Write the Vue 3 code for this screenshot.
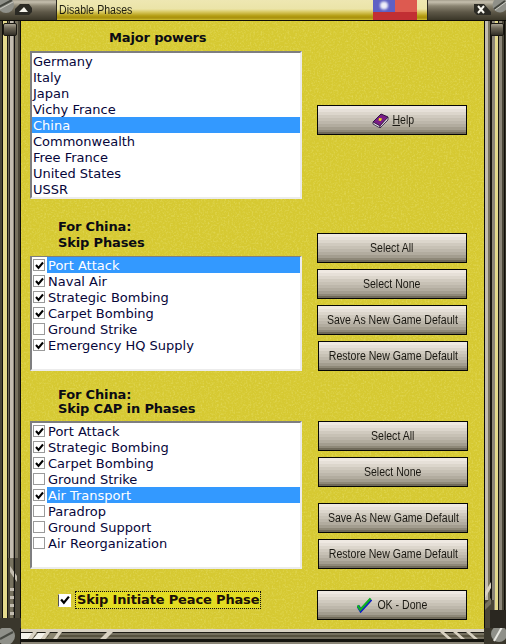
<script setup>
const major = ['Germany', 'Italy', 'Japan', 'Vichy France', 'China', 'Commonwealth', 'Free France', 'United States', 'USSR']
const phases = [
  { t: 'Port Attack', c: true, s: true },
  { t: 'Naval Air', c: true },
  { t: 'Strategic Bombing', c: true },
  { t: 'Carpet Bombing', c: true },
  { t: 'Ground Strike', c: false },
  { t: 'Emergency HQ Supply', c: true },
]
const cap = [
  { t: 'Port Attack', c: true },
  { t: 'Strategic Bombing', c: true },
  { t: 'Carpet Bombing', c: true },
  { t: 'Ground Strike', c: false },
  { t: 'Air Transport', c: true, s: true },
  { t: 'Paradrop', c: false },
  { t: 'Ground Support', c: false },
  { t: 'Air Reorganization', c: false },
]
</script>

<template>
  <div class="win">
    <header class="title">
      <div class="cap left">
        <svg class="screw" width="15" height="14" viewBox="0 0 15 14"><circle cx="6" cy="5" r="8" fill="#8f9089"/><path d="M-1 7 L12 0" stroke="#44463f" stroke-width="2"/><path d="M0 9 L13 2" stroke="#c9c9c2" stroke-width="1"/></svg>
        <svg class="tbtn" width="17" height="11" viewBox="0 0 17 11"><path d="M5 0H14L17 4V8L14 11H0V5Z" fill="#2b2a24"/><path d="M4 8L9 3L13 8Z" fill="#f4f2ea"/></svg>
      </div>
      <div class="strip">
        <span class="caption">Disable Phases</span>
        <div class="flag"><svg width="22" height="12" viewBox="0 0 22 12"><rect width="22" height="12" fill="#5e60c4"/><circle class="sun" cx="11" cy="5.5" r="4" fill="#eeeef8"/></svg></div>
      </div>
      <div class="cap right">
        <svg class="tbtn" width="17" height="11" viewBox="0 0 17 11"><path d="M0 0H10L17 8V11H3L0 8Z" fill="#2b2a24"/><path d="M4 2L10 9M10 2L4 9" stroke="#f8f6ee" stroke-width="2"/></svg>
        <svg class="screw" width="14" height="14" viewBox="0 0 14 14"><circle cx="8" cy="5" r="7.5" fill="#8f9089"/><path d="M2 9 L13 1" stroke="#44463f" stroke-width="2"/><path d="M3 10 L14 2" stroke="#c9c9c2" stroke-width="1"/></svg>
      </div>
    </header>

    <div class="middle">
      <div class="side sl">
        <div class="knob"></div>
        <svg class="deco dl" width="21" height="70" viewBox="0 0 21 70"><rect x="8" y="0" width="12" height="70" fill="#4a4638"/><rect x="10" y="0" width="3" height="70" fill="#77725f"/><path d="M10 8L17 18V24L10 14ZM10 30H15V33H10ZM10 38H15V41H10ZM10 46H15V49H10ZM10 54H15V57H10Z" fill="#c3bdb0"/><rect x="14" y="0" width="1" height="70" fill="#111"/><rect x="0" y="60" width="21" height="10" fill="#3a372c"/></svg>
      </div>

      <main class="content">
        <svg class="grain" width="463" height="608" aria-hidden="true">
          <filter id="g" x="0" y="0" width="100%" height="100%">
            <feTurbulence type="fractalNoise" baseFrequency="0.55" numOctaves="3" seed="4"/>
            <feColorMatrix type="matrix" values="0 0 0 0 1  0 0 0 0 1  0 0 0 0 .5  1.6 0 0 0 -.72"/>
          </filter>
          <rect width="463" height="608" fill="#d6c932"/>
          <rect width="463" height="608" filter="url(#g)" opacity=".35"/>
        </svg>

        <section class="sec a">
          <div class="lc">
            <h2 class="head center">Major powers</h2>
            <div class="list l1">
              <div v-for="m in major" :key="m" class="row plain" :class="{ sel: m === 'China' }">{{ m }}</div>
            </div>
          </div>
          <div class="rc">
            <button class="btn ic">
              <svg width="17" height="16" viewBox="0 0 17 16"><path d="M1 10L9 2L16 5L8 14Z" fill="#7a1c86" stroke="#2e1240"/><path d="M1 10L8 14L8 16L1 12Z" fill="#eee" stroke="#2e1240" stroke-width=".8"/><path d="M8 14L16 5V8L8 16Z" fill="#d8d0d8" stroke="#2e1240" stroke-width=".8"/><path d="M7 6L10 6.5L9 9L6.5 8.5Z" fill="#f0d820"/></svg>
              <span class="bl"><u>H</u>elp</span>
            </button>
          </div>
        </section>

        <section class="sec b">
          <div class="lc">
            <h2 class="head">For China:<br>Skip Phases</h2>
            <div class="list l2">
              <div v-for="p in phases" :key="p.t" class="citem">
                <span class="box"><svg v-if="p.c" width="9" height="9" viewBox="0 0 9 9"><path d="M1 4L3.5 7L8 1.5" fill="none" stroke="#000" stroke-width="2"/></svg></span>
                <span class="row" :class="{ sel: p.s }">{{ p.t }}</span>
              </div>
            </div>
          </div>
          <div class="rc">
            <button class="btn"><span class="bl">Select All</span></button>
            <button class="btn"><span class="bl">Select None</span></button>
            <button class="btn"><span class="bl">Save As New Game Default</span></button>
            <button class="btn nudge"><span class="bl">Restore New Game Default</span></button>
          </div>
        </section>

        <section class="sec c">
          <div class="lc">
            <h2 class="head tight">For China:<br>Skip CAP in Phases</h2>
            <div class="list l3">
              <div v-for="p in cap" :key="p.t" class="citem">
                <span class="box"><svg v-if="p.c" width="9" height="9" viewBox="0 0 9 9"><path d="M1 4L3.5 7L8 1.5" fill="none" stroke="#000" stroke-width="2"/></svg></span>
                <span class="row" :class="{ sel: p.s }">{{ p.t }}</span>
              </div>
            </div>
          </div>
          <div class="rc nudge">
            <button class="btn"><span class="bl">Select All</span></button>
            <button class="btn"><span class="bl">Select None</span></button>
            <button class="btn wide"><span class="bl">Save As New Game Default</span></button>
            <button class="btn"><span class="bl">Restore New Game Default</span></button>
          </div>
        </section>

        <footer class="foot">
          <div class="peace">
            <span class="box big"><svg width="10" height="10" viewBox="0 0 9 9"><path d="M1 4L3.5 7L8 1.5" fill="none" stroke="#000" stroke-width="2"/></svg></span>
            <span class="plabel">Skip Initiate Peace Phase</span>
          </div>
          <button class="btn ic">
            <svg width="15" height="16" viewBox="0 0 16 16"><path d="M1 9L4 14L15 2" fill="none" stroke="#1018c8" stroke-width="3.4"/><path d="M0.5 8.5L3.5 13L14.5 1" fill="none" stroke="#10b020" stroke-width="2.4"/></svg>
            <span class="bl">OK - Done</span>
          </button>
        </footer>
      </main>

      <div class="side sr">
        <div class="knob"></div>
        <svg class="deco dr" width="22" height="50" viewBox="0 0 22 50"><path d="M1 14L7 4V10L1 20Z" fill="#d9d2c2"/><rect x="1" y="22" width="9" height="28" fill="#4a4638"/><path d="M1 26L7 20V26L1 32Z" fill="#77725f"/><rect x="6" y="32" width="16" height="18" fill="#2a2720"/></svg>
      </div>
    </div>

    <div class="bottom">
      <svg width="506" height="16" viewBox="0 0 506 16">
        <rect width="506" height="16" fill="#14130e"/>
        <rect x="0" y="1" width="506" height="3" fill="#d9d2c2"/>
        <rect x="0" y="4" width="506" height="1" fill="#1e1c16"/>
        <rect x="0" y="5" width="506" height="6" fill="#75705f"/>
        <rect x="0" y="7" width="506" height="2" fill="#57523f"/>
        <rect x="0" y="14" width="506" height="2" fill="#8c8778"/>
        <path d="M21 5H33L28 11H21Z" fill="#f4f2ea"/>
        <path d="M38 5H46L41 11H33Z" fill="#f4f2ea"/>
        <path d="M51 5H58L53 11H46Z" fill="#8a8570"/>
        <path d="M33 4H37L32 11H28ZM46 4H50L45 11H41ZM58 4H62L57 11H53ZM107 4H113L106 11H100Z" fill="#d9d2c2"/>
        <path d="M440 4H444L452 11H448ZM453 4H457L465 11H461ZM466 4H470L478 11H474Z" fill="#d9d2c2"/>
        <rect x="0" y="0" width="21" height="16" fill="#3a372c"/>
        <rect x="484" y="0" width="22" height="16" fill="#3a372c"/>
        <circle cx="6" cy="8" r="9" fill="#8f9089"/>
        <path d="M0 11L13 4" stroke="#484a43" stroke-width="2"/>
        <circle cx="499" cy="6" r="8" fill="#8f9089"/>
        <path d="M494 13L502 -1" stroke="#e6e6e0" stroke-width="2"/>
        <rect x="20" y="0" width="1" height="16" fill="#111"/>
      </svg>
    </div>
  </div>
</template>

<style scoped>
.win {
  width: 506px;
  height: 644px;
  overflow: hidden;
  display: flex;
  flex-direction: column;
  background: #1a1814;
  font-family: "DejaVu Sans", sans-serif;
}

.title {
  height: 21px;
  flex: none;
  display: flex;
  border-bottom: 1px solid #0c0b08;
  box-sizing: border-box;
}
.cap {
  display: flex;
  flex: none;
  background: linear-gradient(#a59f8e 0, #c5bfae 2px, #8a8472 6px, #5e5848 12px, #3a3628 20px);
}
.cap.left { width: 56px; border-right: 1px solid #2a2720; }
.cap.right { width: 78px; justify-content: flex-end; border-left: 1px solid #2a2720; }
.left .tbtn { margin: 4px 0 0 0; }
.right .tbtn { margin: 4px 1px 0 0; }
.strip {
  flex: 1;
  display: flex;
  align-items: flex-start;
  background: linear-gradient(#eee7b2 0, #ebe4a8 9px, #d8c860 12px, #b39c10 16px, #a89010 18px, #d0c030 20px);
}
.caption {
  display: inline-block;
  font: 12px/20px "Liberation Sans", sans-serif;
  color: #1d1c10;
  margin-left: 2px;
  white-space: nowrap;
  transform: scaleX(0.88);
  transform-origin: left center;
}
.flag {
  margin-left: auto;
  margin-right: 10px;
  width: 44px;
  height: 20px;
  background: #dd5a50;
  background-image: linear-gradient(transparent 12px, #c22f33 12px);
}
.flag svg { display: block; }
.sun { filter: blur(1px); }

.middle { flex: 1; display: flex; min-height: 0; }
.side { flex: none; position: relative; }
.sl {
  width: 21px;
  background: linear-gradient(90deg,
    #4b4738 0 2px, #100f0a 2px 3px, #e4da8c 3px 7px, #1a1812 7px 8px, #6e6858 8px 9px, #2a2720 9px 10px,
    #c3bdb0 10px 13px, #8c8678 13px 14px, #111 14px 15px, #77725f 15px 18px, #4a4638 18px 20px, #0c0b08 20px 21px);
}
.sr {
  width: 22px;
  background: linear-gradient(90deg,
    #0c0b08 0 1px, #c3bdb0 1px 4px, #77725f 4px 6px, #171510 6px 8px, #8c8678 8px 11px, #e4da8c 11px 14px,
    #1a1812 14px 15px, #8c8678 15px 18px, #4a4638 18px 20px, #100f0a 20px 21px, #3a372c 21px 22px);
}
.knob {
  position: absolute;
  top: 2px;
  width: 14px;
  height: 13px;
  border-radius: 2px;
  background: linear-gradient(#a8a292 0, #6e6858 4px, #2a2720 12px);
  border: 1px solid #1a1812;
  box-sizing: border-box;
}
.sl .knob { left: 3px; }
.sr .knob { right: 2px; }
.deco { position: absolute; bottom: 0; left: 0; display: block; }

.content {
  flex: 1;
  position: relative;
  padding: 8px 0 0 9px;
  min-width: 0;
  color: #111;
}
.grain { position: absolute; left: 0; top: 0; }
.sec, .foot { position: relative; display: flex; }
.sec { gap: 15px; }
.lc { width: 272px; flex: none; }
.rc { display: flex; flex-direction: column; gap: 6px; }
.rc.nudge { margin-left: 1px; padding-top: 34px; }

.sec.a .rc { padding-top: 76px; }
.sec.b { margin-top: 19px; }
.sec.b .rc { padding-top: 15px; }
.sec.c { margin-top: 16px; }
.btn.wide { margin-top: 10px; }
.btn.nudge { margin-left: 1px; }

.head {
  margin: 0 0 5px 0;
  padding: 1px 0 0 28px;
  font: bold 13px/16px "DejaVu Sans", sans-serif;
  letter-spacing: -0.15px;
  color: #0b0b14;
}
.head.center { padding-left: 79px; }
.head.tight { line-height: 14px; }

.list {
  box-sizing: border-box;
  background: #fff;
  border-style: solid;
  border-width: 2px;
  border-color: #7e7e80 #ececec #ececec #7e7e80;
  font: 13px/18px "DejaVu Sans", sans-serif;
  color: #06063a;
  overflow: hidden;
}
.l1 { height: 148px; }
.l2 { height: 115px; border-top-width: 1px; }
.l3 { height: 148px; }

.row { display: block; height: 16px; }
.row.plain { padding-left: 1px; }
.row.sel { background: #3399ff; color: #fff; }
.citem { display: flex; height: 16px; align-items: center; }
.citem .row { flex: 1; padding-left: 1px; margin-left: 2px; }

.box {
  flex: none;
  box-sizing: border-box;
  width: 12px;
  height: 12px;
  margin-left: 1px;
  background: #fff;
  border: 1px solid #9a9a9a;
  display: flex;
  align-items: center;
  justify-content: center;
}
.box svg { display: block; }
.box.big { width: 13px; height: 13px; border-color: #fff #fff #fff #555; margin: 0; }

.btn {
  box-sizing: border-box;
  width: 150px;
  height: 30px;
  padding: 0;
  border: 1px solid #060604;
  display: flex;
  align-items: center;
  justify-content: center;
  gap: 2px;
  color: #1a1812;
  font: 12px/14px "Liberation Sans", sans-serif;
  background: linear-gradient(
    #efe9e2 0 3px, #e6e0d8 3px 6px, #dcd6cc 6px 9px, #d0cabf 9px 12px, #c7c1b5 12px 15px,
    #bdb7ab 15px 18px, #b2ac9f 18px 21px, #a39d8f 21px 24px, #8e8878 24px 26px, #706a5a 26px 30px);
}
.btn.ic { padding-left: 4px; }
.btn svg { flex: none; }
.bl {
  display: inline-block;
  white-space: nowrap;
  transform: scaleX(0.88);
}

.foot {
  margin-top: 21px;
  justify-content: space-between;
  width: 437px;
}
.peace {
  margin: 1px 0 0 28px;
  display: flex;
  align-items: center;
  gap: 5px;
  height: 18px;
}
.plabel {
  font: bold 13px/16px "DejaVu Sans", sans-serif;
  letter-spacing: -0.15px;
  color: #1a0f08;
  background: #e3dc22;
  outline: 1px dotted #111;
  padding: 0 1px;
}

.title, .bottom { flex: none; }
.bottom { height: 16px; }
.bottom svg { display: block; }
</style>
